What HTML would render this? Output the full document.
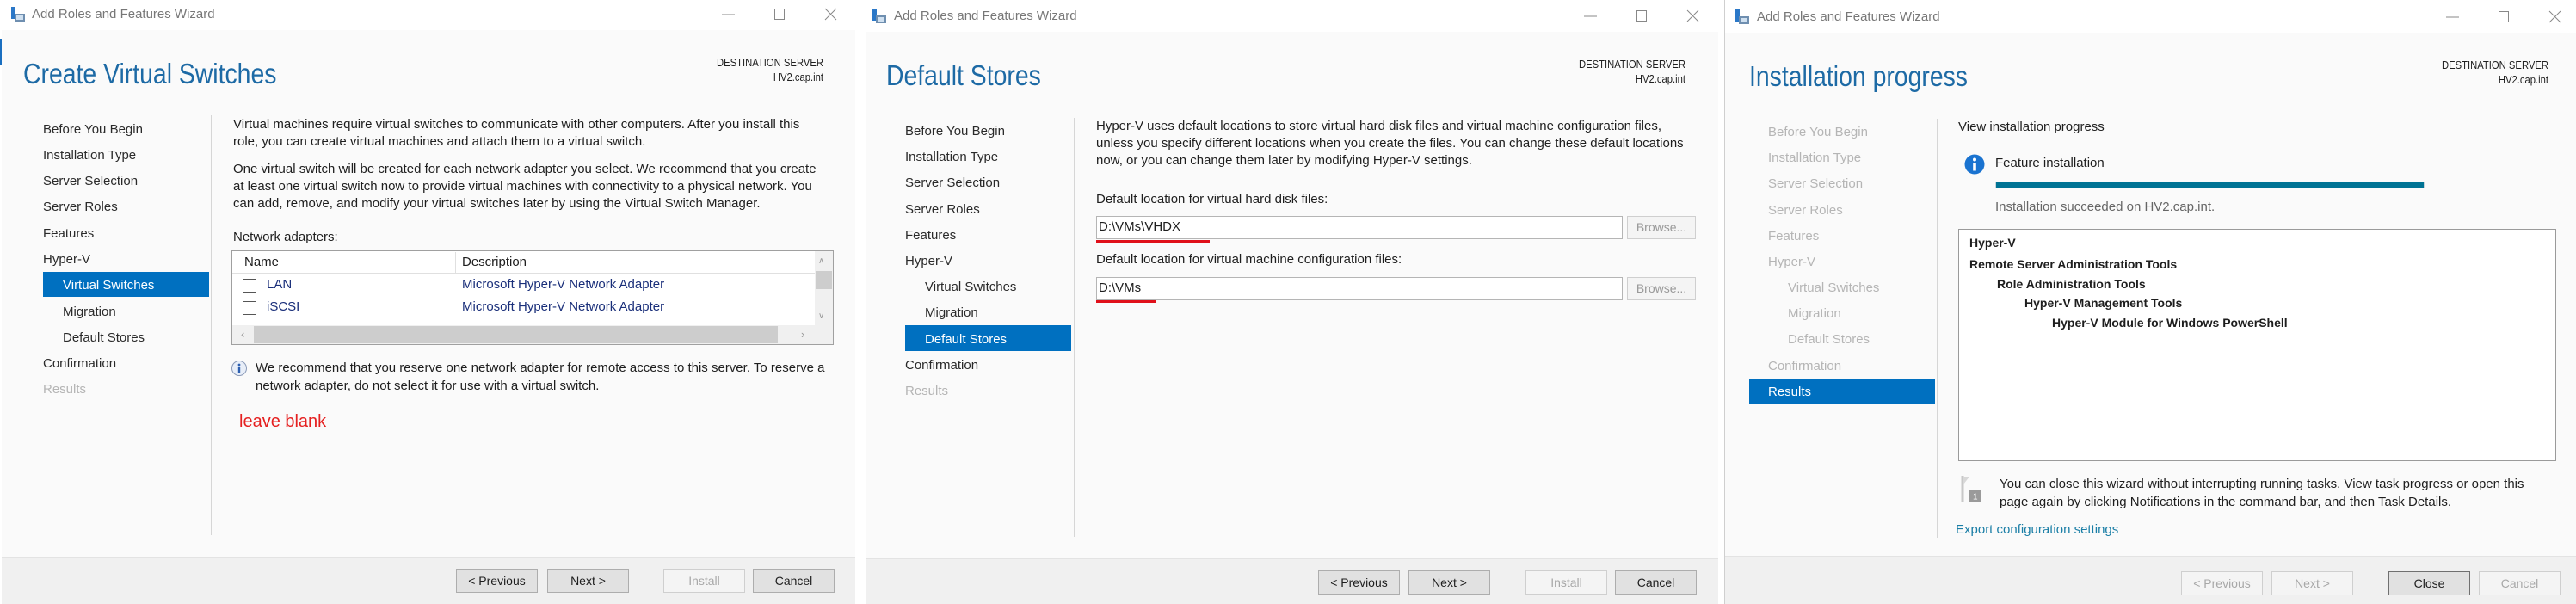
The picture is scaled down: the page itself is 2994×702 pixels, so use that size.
<!DOCTYPE html>
<html><head><meta charset="utf-8"><style>
*{margin:0;padding:0;box-sizing:border-box}
body{width:2994px;height:702px;background:#fff;position:relative;overflow:hidden;font-family:"Liberation Sans",sans-serif;font-size:15px;color:#1e1e1e}
.a{position:absolute;white-space:nowrap;line-height:20px}
.win{position:absolute;background:#fff}
.bodybg{position:absolute;background:#fafafa}
.foot{position:absolute;background:#f0f0f0;border-top:1px solid #e3e3e3}
.tt{position:absolute;font-size:15px;color:#777;white-space:nowrap;line-height:20px}
.h{position:absolute;font-size:33px;color:#1d6aa5;white-space:nowrap;line-height:40px;transform:scaleX(.86);transform-origin:0 50%;font-weight:300}
.dest{position:absolute;text-align:right;font-size:12.5px;line-height:17px;color:#1e1e1e;transform:scaleX(.9);transform-origin:100% 50%}
.nav{position:absolute;font-size:15px;color:#2a2a2a;white-space:nowrap;line-height:20px}
.dis{color:#b5b5b5}
.sel{position:absolute;background:#0070c0}
.sep{position:absolute;width:1px;background:#d6d6d6}
.btn{position:absolute;height:28px;width:95px;background:#e1e1e1;border:1px solid #adadad;text-align:center;line-height:26px;font-size:14px;color:#1e1e1e}
.btn.d{background:#f4f4f4;border-color:#cfcfcf;color:#a8a8a8}
.ctl{position:absolute}
.bd{font-size:14px;font-weight:bold}
</style></head><body>

<!-- ============ PANEL 1 ============ -->
<div class="win" style="left:0;top:0;width:994px;height:702px"></div>
<div style="position:absolute;left:0;top:45px;width:2px;height:30px;background:#1a6fc0"></div>
<svg class="ctl" style="left:12px;top:8px" width="18" height="18"><rect x="1" y="0" width="5" height="14" fill="#2b78c8"/><rect x="5" y="8" width="12" height="9" fill="#6f8fb0"/><rect x="7" y="10" width="8" height="5" fill="#cfe0f0"/></svg>
<div class="tt" style="left:37px;top:7px">Add Roles and Features Wizard</div>
<svg class="ctl" style="left:838px;top:8px" width="140" height="20"><line x1="1" y1="9" x2="16" y2="9" stroke="#888"/><rect x="62.5" y="2.5" width="11" height="12" fill="none" stroke="#888"/><path d="M121 2L134 15M134 2L121 15" stroke="#888"/></svg>
<div class="bodybg" style="left:2px;top:35px;width:992px;height:612px"></div>
<div class="foot" style="left:2px;top:647px;width:992px;height:55px"></div>
<div class="h" style="left:27px;top:66px">Create Virtual Switches</div>
<div class="dest" style="left:657px;top:65px;width:300px">DESTINATION SERVER<br>HV2.cap.int</div>
<div class="sep" style="left:245px;top:134px;height:488px"></div>
<div class="sel" style="left:50px;top:316px;width:193px;height:29px"></div>
<div class="nav" style="left:50px;top:141px">Before You Begin</div>
<div class="nav" style="left:50px;top:171px">Installation Type</div>
<div class="nav" style="left:50px;top:201px">Server Selection</div>
<div class="nav" style="left:50px;top:231px">Server Roles</div>
<div class="nav" style="left:50px;top:262px">Features</div>
<div class="nav" style="left:50px;top:292px">Hyper-V</div>
<div class="nav" style="left:73px;top:322px;color:#fff">Virtual Switches</div>
<div class="nav" style="left:73px;top:353px">Migration</div>
<div class="nav" style="left:73px;top:383px">Default Stores</div>
<div class="nav" style="left:50px;top:413px">Confirmation</div>
<div class="nav dis" style="left:50px;top:443px">Results</div>
<div class="a" style="left:271px;top:135px">Virtual machines require virtual switches to communicate with other computers. After you install this</div>
<div class="a" style="left:271px;top:155px">role, you can create virtual machines and attach them to a virtual switch.</div>
<div class="a" style="left:271px;top:187px">One virtual switch will be created for each network adapter you select. We recommend that you create</div>
<div class="a" style="left:271px;top:207px">at least one virtual switch now to provide virtual machines with connectivity to a physical network. You</div>
<div class="a" style="left:271px;top:227px">can add, remove, and modify your virtual switches later by using the Virtual Switch Manager.</div>
<div class="a" style="left:271px;top:266px">Network adapters:</div>
<div style="position:absolute;left:269px;top:291px;width:700px;height:110px;background:#fff;border:1px solid #a0a0a0"></div>
<div style="position:absolute;left:270px;top:292px;width:677px;height:26px;background:#fff;border-bottom:1px solid #e0e0e0"></div>
<div style="position:absolute;left:529px;top:293px;width:1px;height:24px;background:#e0e0e0"></div>
<div class="a" style="left:284px;top:295px">Name</div>
<div class="a" style="left:537px;top:295px">Description</div>
<div style="position:absolute;left:282px;top:324px;width:16px;height:16px;border:1px solid #555;background:#fff"></div>
<div style="position:absolute;left:282px;top:350px;width:16px;height:16px;border:1px solid #555;background:#fff"></div>
<div class="a" style="left:310px;top:321px;color:#1a2f7a">LAN</div>
<div class="a" style="left:310px;top:347px;color:#1a2f7a">iSCSI</div>
<div class="a" style="left:537px;top:321px;color:#1a2f7a">Microsoft Hyper-V Network Adapter</div>
<div class="a" style="left:537px;top:347px;color:#1a2f7a">Microsoft Hyper-V Network Adapter</div>
<div style="position:absolute;left:947px;top:292px;width:21px;height:86px;background:#f0f0f0"></div>
<div style="position:absolute;left:948px;top:315px;width:19px;height:21px;background:#cdcdcd"></div>
<div class="a" style="left:951px;top:294px;font-size:10px;color:#999">&#8743;</div>
<div class="a" style="left:951px;top:358px;font-size:10px;color:#999">&#8744;</div>
<div style="position:absolute;left:270px;top:378px;width:698px;height:22px;background:#f0f0f0"></div>
<div style="position:absolute;left:295px;top:379px;width:609px;height:20px;background:#cdcdcd"></div>
<div class="a" style="left:280px;top:379px;color:#999;font-size:13px">&#8249;</div>
<div class="a" style="left:931px;top:379px;color:#999;font-size:13px">&#8250;</div>
<svg class="ctl" style="left:268px;top:418px" width="20" height="20"><circle cx="10" cy="10" r="8.5" fill="#e8eef8" stroke="#8a9ab8"/><circle cx="10" cy="6" r="1.4" fill="#2d5fb0"/><rect x="8.8" y="8.5" width="2.4" height="6.5" fill="#2d5fb0"/></svg>
<div class="a" style="left:297px;top:418px">We recommend that you reserve one network adapter for remote access to this server. To reserve a</div>
<div class="a" style="left:297px;top:439px">network adapter, do not select it for use with a virtual switch.</div>
<div class="a" style="left:278px;top:478px;color:#e52020;font-size:20px;line-height:24px">leave blank</div>
<div class="btn" style="left:530px;top:661px">&lt; Previous</div>
<div class="btn" style="left:636px;top:661px">Next &gt;</div>
<div class="btn d" style="left:771px;top:661px">Install</div>
<div class="btn" style="left:875px;top:661px">Cancel</div>

<!-- ============ PANEL 2 ============ -->
<div class="win" style="left:1006px;top:0;width:991px;height:702px"></div>
<svg class="ctl" style="left:1013px;top:10px" width="18" height="18"><rect x="1" y="0" width="5" height="14" fill="#2b78c8"/><rect x="5" y="8" width="12" height="9" fill="#6f8fb0"/><rect x="7" y="10" width="8" height="5" fill="#cfe0f0"/></svg>
<div class="tt" style="left:1039px;top:9px">Add Roles and Features Wizard</div>
<svg class="ctl" style="left:1840px;top:10px" width="140" height="20"><line x1="1" y1="9" x2="16" y2="9" stroke="#888"/><rect x="62.5" y="2.5" width="11" height="12" fill="none" stroke="#888"/><path d="M121 2L134 15M134 2L121 15" stroke="#888"/></svg>
<div class="bodybg" style="left:1006px;top:37px;width:991px;height:612px"></div>
<div class="foot" style="left:1006px;top:649px;width:991px;height:53px"></div>
<div class="h" style="left:1030px;top:68px">Default Stores</div>
<div class="dest" style="left:1659px;top:67px;width:300px">DESTINATION SERVER<br>HV2.cap.int</div>
<div class="sep" style="left:1248px;top:137px;height:487px"></div>
<div class="sel" style="left:1052px;top:378px;width:193px;height:30px"></div>
<div class="nav" style="left:1052px;top:143px">Before You Begin</div>
<div class="nav" style="left:1052px;top:173px">Installation Type</div>
<div class="nav" style="left:1052px;top:203px">Server Selection</div>
<div class="nav" style="left:1052px;top:234px">Server Roles</div>
<div class="nav" style="left:1052px;top:264px">Features</div>
<div class="nav" style="left:1052px;top:294px">Hyper-V</div>
<div class="nav" style="left:1075px;top:324px">Virtual Switches</div>
<div class="nav" style="left:1075px;top:354px">Migration</div>
<div class="nav" style="left:1075px;top:385px;color:#fff">Default Stores</div>
<div class="nav" style="left:1052px;top:415px">Confirmation</div>
<div class="nav dis" style="left:1052px;top:445px">Results</div>
<div class="a" style="left:1274px;top:137px">Hyper-V uses default locations to store virtual hard disk files and virtual machine configuration files,</div>
<div class="a" style="left:1274px;top:157px">unless you specify different locations when you create the files. You can change these default locations</div>
<div class="a" style="left:1274px;top:177px">now, or you can change them later by modifying Hyper-V settings.</div>
<div class="a" style="left:1274px;top:222px">Default location for virtual hard disk files:</div>
<div style="position:absolute;left:1274px;top:251px;width:612px;height:27px;background:#fff;border:1px solid #b5b5b5"></div>
<div class="a" style="left:1277px;top:254px">D:\VMs\VHDX</div>
<div style="position:absolute;left:1274px;top:279px;width:132px;height:3px;background:#e0101a"></div>
<div class="btn d" style="left:1891px;top:251px;width:80px;height:27px;line-height:25px;color:#999">Browse...</div>
<div class="a" style="left:1274px;top:292px">Default location for virtual machine configuration files:</div>
<div style="position:absolute;left:1274px;top:322px;width:612px;height:27px;background:#fff;border:1px solid #b5b5b5"></div>
<div class="a" style="left:1277px;top:325px">D:\VMs</div>
<div style="position:absolute;left:1274px;top:349px;width:69px;height:3px;background:#e0101a"></div>
<div class="btn d" style="left:1891px;top:322px;width:80px;height:27px;line-height:25px;color:#999">Browse...</div>
<div class="btn" style="left:1532px;top:663px">&lt; Previous</div>
<div class="btn" style="left:1637px;top:663px">Next &gt;</div>
<div class="btn d" style="left:1773px;top:663px">Install</div>
<div class="btn" style="left:1877px;top:663px">Cancel</div>

<!-- ============ PANEL 3 ============ -->
<div class="win" style="left:2004px;top:0;width:990px;height:702px;border-left:1px solid #cfcfcf"></div>
<svg class="ctl" style="left:2016px;top:11px" width="18" height="18"><rect x="1" y="0" width="5" height="14" fill="#2b78c8"/><rect x="5" y="8" width="12" height="9" fill="#6f8fb0"/><rect x="7" y="10" width="8" height="5" fill="#cfe0f0"/></svg>
<div class="tt" style="left:2042px;top:10px">Add Roles and Features Wizard</div>
<svg class="ctl" style="left:2842px;top:11px" width="140" height="20"><line x1="1" y1="9" x2="16" y2="9" stroke="#888"/><rect x="62.5" y="2.5" width="11" height="12" fill="none" stroke="#888"/><path d="M121 2L134 15M134 2L121 15" stroke="#888"/></svg>
<div class="bodybg" style="left:2005px;top:38px;width:989px;height:608px"></div>
<div class="foot" style="left:2005px;top:646px;width:989px;height:56px"></div>
<div class="h" style="left:2033px;top:69px">Installation progress</div>
<div class="dest" style="left:2662px;top:68px;width:300px">DESTINATION SERVER<br>HV2.cap.int</div>
<div class="sep" style="left:2251px;top:138px;height:487px"></div>
<div class="sel" style="left:2033px;top:440px;width:216px;height:30px"></div>
<div class="nav dis" style="left:2055px;top:144px">Before You Begin</div>
<div class="nav dis" style="left:2055px;top:174px">Installation Type</div>
<div class="nav dis" style="left:2055px;top:204px">Server Selection</div>
<div class="nav dis" style="left:2055px;top:235px">Server Roles</div>
<div class="nav dis" style="left:2055px;top:265px">Features</div>
<div class="nav dis" style="left:2055px;top:295px">Hyper-V</div>
<div class="nav dis" style="left:2078px;top:325px">Virtual Switches</div>
<div class="nav dis" style="left:2078px;top:355px">Migration</div>
<div class="nav dis" style="left:2078px;top:385px">Default Stores</div>
<div class="nav dis" style="left:2055px;top:416px">Confirmation</div>
<div class="nav" style="left:2055px;top:446px;color:#fff">Results</div>
<div class="a" style="left:2276px;top:138px">View installation progress</div>
<svg class="ctl" style="left:2283px;top:179px" width="24" height="24"><circle cx="12" cy="12" r="11.5" fill="#1a73d0"/><circle cx="12" cy="6.5" r="2" fill="#fff"/><rect x="10.2" y="10" width="3.6" height="9.5" fill="#fff"/></svg>
<div class="a" style="left:2319px;top:180px">Feature installation</div>
<div style="position:absolute;left:2319px;top:211px;width:499px;height:8px;background:#007394;border:1px solid #c9d5db"></div>
<div class="a" style="left:2319px;top:231px;color:#666">Installation succeeded on HV2.cap.int.</div>
<div style="position:absolute;left:2276px;top:266px;width:695px;height:270px;background:#fff;border:1px solid #9a9a9a"></div>
<div class="a bd" style="left:2289px;top:272px">Hyper-V</div>
<div class="a bd" style="left:2289px;top:297px">Remote Server Administration Tools</div>
<div class="a bd" style="left:2321px;top:320px">Role Administration Tools</div>
<div class="a bd" style="left:2353px;top:342px">Hyper-V Management Tools</div>
<div class="a bd" style="left:2385px;top:365px">Hyper-V Module for Windows PowerShell</div>
<svg class="ctl" style="left:2279px;top:553px" width="28" height="36"><path d="M2 0V30" stroke="#c8c8c8" stroke-width="3"/><path d="M3 1L10 1L3 10Z" fill="#d8d8d8"/><rect x="10" y="16" width="14" height="14" fill="#9a9a9a"/><text x="14" y="27.5" font-size="10" fill="#fff" font-family="Liberation Sans">1</text></svg>
<div class="a" style="left:2324px;top:553px">You can close this wizard without interrupting running tasks. View task progress or open this</div>
<div class="a" style="left:2324px;top:574px">page again by clicking Notifications in the command bar, and then Task Details.</div>
<div class="a" style="left:2273px;top:606px;color:#1a7ea6">Export configuration settings</div>
<div class="btn d" style="left:2535px;top:664px">&lt; Previous</div>
<div class="btn d" style="left:2640px;top:664px">Next &gt;</div>
<div class="btn" style="left:2776px;top:664px;border-color:#707070">Close</div>
<div class="btn d" style="left:2881px;top:664px">Cancel</div>
</body></html>
